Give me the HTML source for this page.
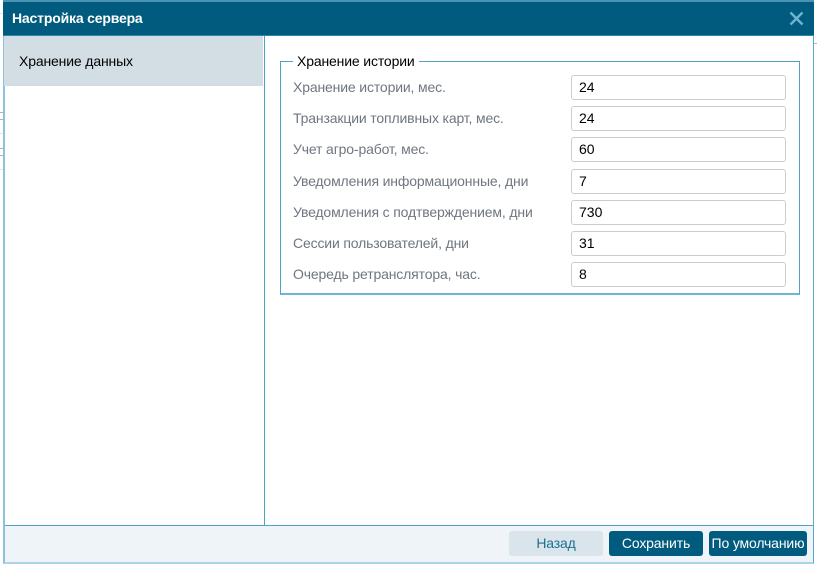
<!DOCTYPE html>
<html lang="ru">
<head>
<meta charset="utf-8">
<style>
html,body{margin:0;padding:0;width:817px;height:565px;overflow:hidden;background:#fff;font-family:"Liberation Sans",Arial,sans-serif;}
.a{position:absolute;box-sizing:border-box;}
.bgline{background:#e4e4e4;left:0;width:3px;height:1px;}
.bgbox{background:#b0b0b0;left:0;width:3px;height:1px;}
.win{left:3px;top:1px;width:811px;height:563px;border:1px solid #5aa9cc;border-bottom:2px solid #a9d3e6;border-left:2px solid #8cc2dc;background:#fff;}
.lab{left:293px;font-size:14px;color:#6f7680;line-height:16px;white-space:nowrap;letter-spacing:-0.15px;}
.inp{left:571px;width:215px;height:25px;border:1px solid #ccc;border-radius:3px;background:#fff;font-size:14px;color:#000;line-height:23px;padding-left:7px;}
.btn{top:531px;height:25px;border-radius:3px;text-align:center;font-size:14px;line-height:25px;white-space:nowrap;letter-spacing:-0.15px;}
</style>
</head>
<body>
<div class="a bgline" style="top:13px"></div>
<div class="a bgbox" style="top:112px"></div>
<div class="a bgbox" style="top:119px"></div>
<div class="a bgline" style="top:133px"></div>
<div class="a bgbox" style="top:148px"></div>
<div class="a bgbox" style="top:155px"></div>
<div class="a bgline" style="top:169px"></div>
<div class="a" style="left:814px;top:43px;width:3px;height:1px;background:#bbb"></div>

<div class="a win"></div>
<div class="a" style="left:3px;top:0;width:811px;height:2px;background:#4a93b4"></div>
<div class="a" style="left:3px;top:2px;width:811px;height:34px;background:#005b7f"></div>
<div class="a" style="left:3px;top:35px;width:811px;height:1px;background:#2a86ab"></div>
<div class="a" style="left:12px;top:10px;font-size:14px;font-weight:bold;color:#fff;line-height:16px;white-space:nowrap;letter-spacing:-0.18px">Настройка сервера</div>
<svg class="a" style="left:789px;top:11px" width="15" height="15" viewBox="0 0 15 15"><path d="M1.5 1.5L13.5 13.5M13.5 1.5L1.5 13.5" stroke="#6fb4d0" stroke-width="2.4" fill="none"/></svg>

<div class="a" style="left:4px;top:36px;width:259px;height:50px;background:#d3dee4"></div>
<div class="a" style="left:19px;top:53px;font-size:14px;color:#000;line-height:16px;white-space:nowrap;letter-spacing:-0.15px">Хранение данных</div>
<div class="a" style="left:264px;top:36px;width:1px;height:489px;background:#4fa3c9"></div>

<div class="a" style="left:280px;top:61px;width:520px;height:234px;border:1px solid #4fa3c9;border-bottom:2px solid #6fb6d6"></div>
<div class="a" style="left:293px;top:53px;height:16px;background:#fff;padding:0 4px;font-size:14px;color:#000;line-height:16px;white-space:nowrap;letter-spacing:-0.15px">Хранение истории</div>

<div class="a lab" style="top:79px">Хранение истории, мес.</div>
<div class="a inp" style="top:75px">24</div>
<div class="a lab" style="top:110px">Транзакции топливных карт, мес.</div>
<div class="a inp" style="top:106px">24</div>
<div class="a lab" style="top:141px">Учет агро-работ, мес.</div>
<div class="a inp" style="top:137px">60</div>
<div class="a lab" style="top:173px">Уведомления информационные, дни</div>
<div class="a inp" style="top:169px">7</div>
<div class="a lab" style="top:204px">Уведомления с подтверждением, дни</div>
<div class="a inp" style="top:200px">730</div>
<div class="a lab" style="top:235px">Сессии пользователей, дни</div>
<div class="a inp" style="top:231px">31</div>
<div class="a lab" style="top:266px">Очередь ретранслятора, час.</div>
<div class="a inp" style="top:262px">8</div>

<div class="a" style="left:5px;top:525px;width:808px;height:37px;background:#eff4f8;border-top:1px solid #4fa3c9"></div>
<div class="a btn" style="left:509px;width:94px;background:#d9e5eb;color:#1d6f92">Назад</div>
<div class="a btn" style="left:609px;width:94px;background:#005b7f;color:#fff">Сохранить</div>
<div class="a btn" style="left:709px;width:98px;background:#005b7f;color:#fff">По умолчанию</div>
</body>
</html>
